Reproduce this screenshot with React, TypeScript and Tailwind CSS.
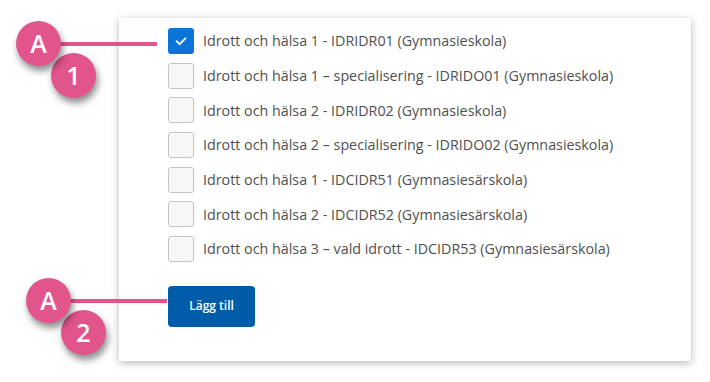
const courses = [
  { label: 'Idrott och hälsa 1 - IDRIDR01 (Gymnasieskola)', checked: true },
  { label: 'Idrott och hälsa 1 – specialisering - IDRIDO01 (Gymnasieskola)', checked: false },
  { label: 'Idrott och hälsa 2 - IDRIDR02 (Gymnasieskola)', checked: false },
  { label: 'Idrott och hälsa 2 – specialisering - IDRIDO02 (Gymnasieskola)', checked: false },
  { label: 'Idrott och hälsa 1 - IDCIDR51 (Gymnasiesärskola)', checked: false },
  { label: 'Idrott och hälsa 2 - IDCIDR52 (Gymnasiesärskola)', checked: false },
  { label: 'Idrott och hälsa 3 – vald idrott - IDCIDR53 (Gymnasiesärskola)', checked: false },
];

function Bubble({ text, className }: { text: string; className: string }) {
  return (
    <div
      className={`absolute flex h-[45px] w-[45px] items-center justify-center rounded-full bg-[#e2548c] text-[25px] font-semibold text-white shadow-[2px_5px_7px_rgba(0,0,0,0.45)] ${className}`}
    >
      {text}
    </div>
  );
}

// A-bubble + number bubble + line to the target
function Marker({ top, left, width, num }: { top: number; left: number; width: number; num: string }) {
  return (
    <div className="absolute" style={{ top, left }}>
      <div className="absolute left-[20px] top-[-2px] h-[4px] bg-[#e2548c]" style={{ width }} />
      <Bubble text={num} className="left-[12px] top-[9px]" />
      <Bubble text="A" className="left-[-23px] top-[-23px]" />
    </div>
  );
}

export default function App() {
  return (
    <div
      className="relative h-[382px] w-[710px] overflow-hidden bg-white"
      style={{ fontFamily: '"Open Sans", "Noto Sans", sans-serif' }}
    >
      <div className="ml-[119px] mt-[18px] h-[343px] w-[572px] bg-white pl-[49px] pt-[10px] shadow-[0_2px_8px_rgba(0,0,0,0.28)]">
        <div className="flex flex-col gap-[8.67px]">
          {courses.map((c) => (
            <label key={c.label} className="flex h-[26px] items-center gap-[9px]">
              {c.checked ? (
                <span className="flex h-[26px] w-[26px] items-center justify-center rounded-[3px] bg-[#0a74d9]">
                  <svg width="12" height="9" viewBox="0 0 12 9" fill="none">
                    <path d="M1.5 4.2 4.6 7.2 10.5 1.3" stroke="white" strokeWidth="1.8" strokeLinecap="round" strokeLinejoin="round" />
                  </svg>
                </span>
              ) : (
                <span className="h-[26px] w-[26px] rounded-[3px] border border-[#c4c4c4] bg-[#f7f7f7]" />
              )}
              <span className="text-[14.3px] text-[#505050]">{c.label}</span>
            </label>
          ))}
        </div>
        <button className="mt-[24px] h-[41px] w-[87px] rounded-[4px] bg-[#005ba8] text-[12px] font-semibold text-white">
          Lägg till
        </button>
      </div>

      <Marker top={44} left={39} width={98} num="1" />
      <Marker top={301} left={49} width={98} num="2" />
    </div>
  );
}
